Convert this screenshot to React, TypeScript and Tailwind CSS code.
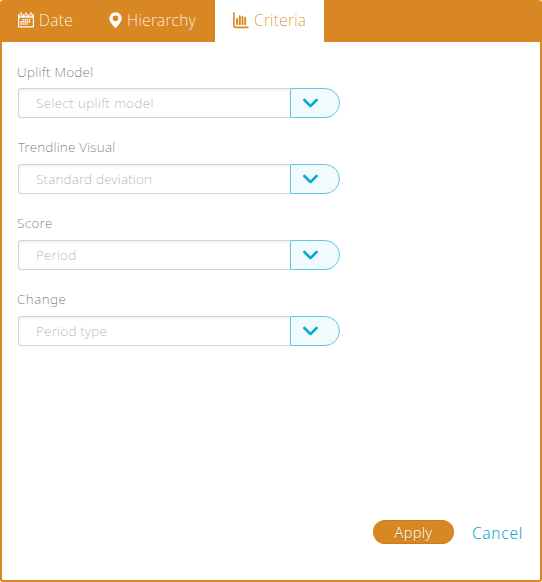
import type { ReactNode } from "react";

const fields = [
  { label: "Uplift Model", value: "Select uplift model", labelStyle: "tracking-[0.3px]", valueStyle: "tracking-[0.38px]", gap: "mt-[6px]" },
  { label: "Trendline Visual", value: "Standard deviation", labelStyle: "tracking-[0.23px] pl-px", valueStyle: "tracking-[0.22px]", gap: "mt-[7px]" },
  { label: "Score", value: "Period", labelStyle: "tracking-[0.4px]", valueStyle: "tracking-[0.2px]", gap: "mt-[7px]" },
  { label: "Change", value: "Period type", labelStyle: "tracking-[0.5px]", valueStyle: "tracking-[0.25px]", gap: "mt-[7px]" },
];

function CalendarIcon() {
  return (
    <svg width="16" height="16" viewBox="0 0 16 16" fill="none">
      <path fill="white" fillRule="evenodd" d="M0 2.2h1.6v2h2.8v-2h2.2v2H9.4v-2h2v2h2.8v-2H16v12.1a1.2 1.2 0 0 1-1.2 1.2H1.2A1.2 1.2 0 0 1 0 14.3ZM1.2 5.8v8.4h13.6V5.8Z" />
      <path stroke="white" strokeWidth="1.4" strokeLinecap="round" d="M3 .8v2.3M8 .8v2.3M13 .8v2.3" />
      <path stroke="white" strokeWidth="1.6" strokeDasharray="1.5 .6" d="M4.4 7.8h8M2.3 9.9h10M2.3 12h7.8" />
    </svg>
  );
}

function PinIcon() {
  return (
    <svg width="13" height="17" viewBox="0 0 13 17" fill="white">
      <path fillRule="evenodd" d="M6.5.2A6.2 6.2 0 0 0 .3 6.4c0 3.8 4.2 7.2 6.2 9.8 2-2.6 6.2-6 6.2-9.8A6.2 6.2 0 0 0 6.5.2Zm0 3.3a2.8 2.8 0 1 1 0 5.6 2.8 2.8 0 0 1 0-5.6Z" />
    </svg>
  );
}

function ChartIcon() {
  return (
    <svg width="16" height="17" viewBox="0 0 16 17" fill="none" stroke="#d98722">
      <path strokeWidth="1.6" strokeLinecap="round" strokeLinejoin="round" d="M.9.9v12.6q0 1.9 1.9 1.9h12.1" />
      <path strokeWidth="1.9" strokeLinecap="round" d="M4 12.2V7M6.8 12.2V4.2M9.5 12.2V4.9M12.2 12.2V5.8" />
    </svg>
  );
}

function Tab({ children, className }: { children: ReactNode; className: string }) {
  return <button className={`flex h-full items-start ${className}`}>{children}</button>;
}

export default function App() {
  return (
    <div className="flex h-[582px] w-[542px] flex-col overflow-hidden rounded-[3px] border-2 border-t-0 border-[#d98722] bg-white font-['Noto_Sans',sans-serif] font-extralight">
      <nav className="flex h-[42px] shrink-0 bg-[#d98722] text-[15.5px] leading-[20px] text-white">
        <Tab className="w-[91px] pt-[12px] pl-[16px]">
          <CalendarIcon />
          <span className="-mt-0.5 ml-[5px] tracking-[0.4px]">Date</span>
        </Tab>
        <Tab className="w-[122px] pt-[12px] pl-[16px]">
          <PinIcon />
          <span className="-mt-0.5 ml-[5px] tracking-[0.4px]">Hierarchy</span>
        </Tab>
        <Tab className="w-[109px] bg-white pt-[12px] pl-[18px] text-[#d98722]">
          <ChartIcon />
          <span className="-mt-0.5 ml-[5px] tracking-[0.3px]">Criteria</span>
        </Tab>
      </nav>
      <main className="flex-1 pt-5 pl-[15px]">
        {fields.map((f) => (
          <section key={f.label} className="mb-[19px]">
            <div className={`h-5 text-[13.5px] leading-[20px] whitespace-nowrap text-[#65736f] ${f.labelStyle}`}>{f.label}</div>
            <div className={`ml-px flex h-[30px] w-[322px] ${f.gap}`}>
              <div className="flex w-[272px] items-center rounded-l-[3px] border border-r-0 border-[#d2d5d4] pl-[17px] shadow-[inset_0_2px_3px_rgba(0,0,0,0.05)]">
                <span className={`text-[13.5px] leading-[20px] whitespace-nowrap text-[#a8b0ad] ${f.valueStyle}`}>{f.value}</span>
              </div>
              <button className="flex w-[50px] items-center rounded-r-[15px] border border-[#63c8df] bg-[#f1fbfe] pl-[12px]">
                <svg width="16" height="10" viewBox="0 0 16 10" fill="none" stroke="#05a9d1" strokeWidth="2.6" strokeLinecap="round" strokeLinejoin="round">
                  <path d="M1.4 2 7.5 8.1 13.6 2" />
                </svg>
              </button>
            </div>
          </section>
        ))}
      </main>
      <footer className="flex h-[61px] items-start justify-end pr-[17px] text-[15.5px]">
        <button className="mt-px mr-[18px] h-6 w-[81px] rounded-full border-y border-[#cc7c1c] bg-[#d98722] text-[14.5px] leading-[21px] font-light tracking-[0.3px] text-white [text-shadow:0_1px_1px_rgba(0,0,0,0.25)]">Apply</button>
        <button className="mt-[3px] w-[51px] text-left leading-[22px] font-light tracking-[0.7px] whitespace-nowrap text-[#05a9d1]">Cancel</button>
      </footer>
    </div>
  );
}
